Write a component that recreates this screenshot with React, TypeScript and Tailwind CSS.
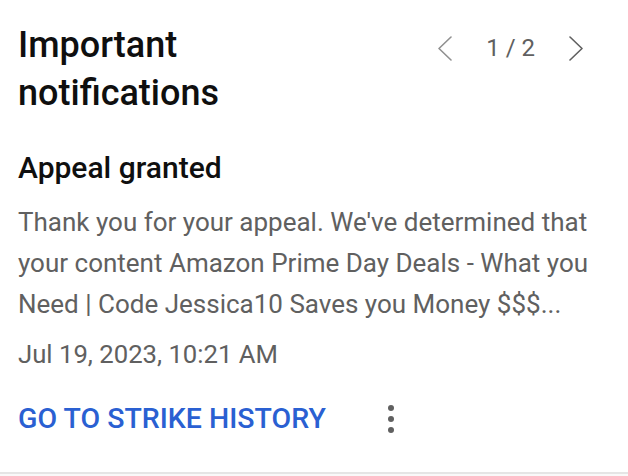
function Chevron({ dir, color }: { dir: 'left' | 'right'; color: string }) {
  const d = dir === 'left' ? 'M14 1 L2 12.5 L14 24' : 'M2 1 L14 12.5 L2 24'
  return (
    <svg width="16" height="25" viewBox="0 0 16 25" fill="none">
      <path d={d} stroke={color} strokeWidth="1.6" strokeLinecap="round" strokeLinejoin="round" />
    </svg>
  )
}

export default function App() {
  return (
    <div className="w-[628px] h-[476px] bg-white flex flex-col font-['Roboto',sans-serif] overflow-hidden">
      <div className="flex-1 pl-[18px]">
        {/* Header */}
        <div className="flex justify-between items-start pt-[21px] pr-[44px]">
          <h1 className="w-[260px] text-[36px] leading-[48px] font-medium text-[#0f0f0f]">
            Important notifications
          </h1>
          <div className="flex items-center h-[48px] pt-[6px] text-[#606060]">
            <Chevron dir="left" color="#909090" />
            <span className="mx-[33px] text-[24px] leading-[28px]">1 / 2</span>
            <Chevron dir="right" color="#606060" />
          </div>
        </div>

        {/* Notification */}
        <h2 className="mt-[33px] text-[30px] leading-[36px] font-medium text-[#0f0f0f]">
          Appeal granted
        </h2>
        <p className="mt-[16px] w-[578px] text-[26px] leading-[41px] text-[#606060]">
          Thank you for your appeal. We've determined that your content Amazon Prime Day Deals - What you Need | Code Jessica10 Saves you Money $$$...
        </p>
        <p className="mt-[11px] text-[25.7px] leading-[36px] text-[#606060]">Jul 19, 2023, 10:21 AM</p>

        {/* Actions */}
        <div className="flex items-center mt-[29px]">
          <button className="text-[28.5px] leading-[36px] font-medium text-[#2a60d2]">
            GO TO STRIKE HISTORY
          </button>
          <div className="ml-[62px] flex flex-col gap-[5px] items-center">
            <span className="w-[6px] h-[6px] rounded-full bg-[#606060]" />
            <span className="w-[6px] h-[6px] rounded-full bg-[#606060]" />
            <span className="w-[6px] h-[6px] rounded-full bg-[#606060]" />
          </div>
        </div>
      </div>
      <div className="h-[4px] border-t-2 border-[#e5e5e5] bg-[#f9f9f9]" />
    </div>
  )
}
